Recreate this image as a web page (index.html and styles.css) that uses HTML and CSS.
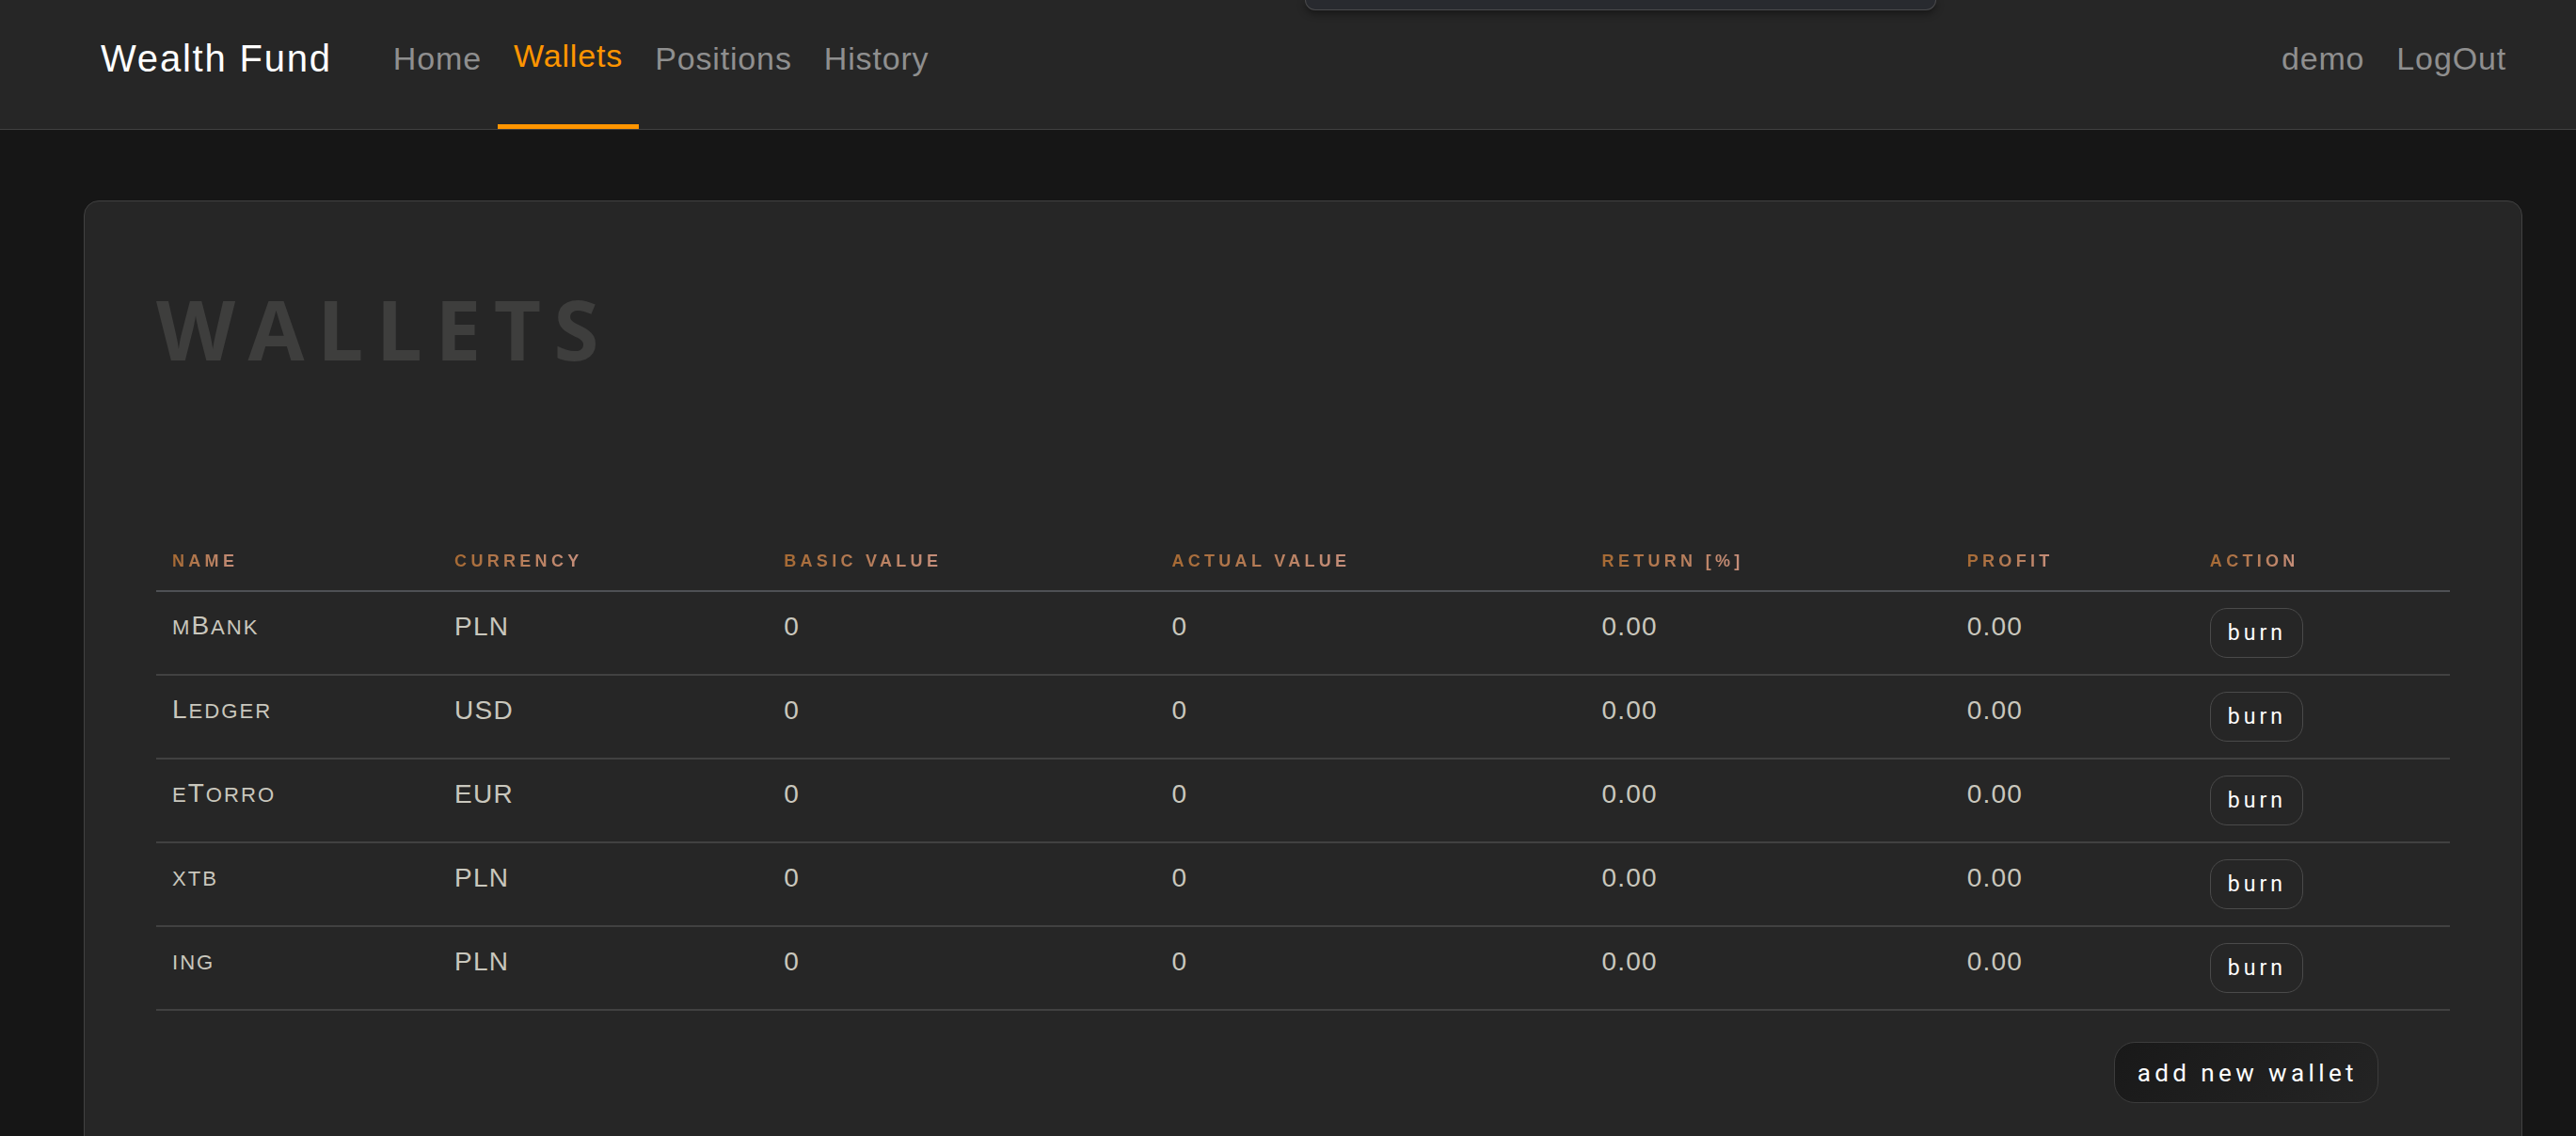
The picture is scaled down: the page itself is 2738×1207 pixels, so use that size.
FILE: index.html
```html
<!DOCTYPE html>
<html lang="en">
<head>
<meta charset="utf-8">
<title>Wealth Fund – Wallets</title>
<link rel="stylesheet" href="styles.css">
</head>
<body>
<div class="toast"></div>
<header class="topbar">
  <a class="brand" href="#">Wealth Fund</a>
  <nav class="nav">
    <a class="nav-link" href="#">Home</a>
    <a class="nav-link active" href="#">Wallets</a>
    <a class="nav-link" href="#">Positions</a>
    <a class="nav-link" href="#">History</a>
  </nav>
  <nav class="nav nav-right">
    <a class="nav-link" href="#">demo</a>
    <a class="nav-link" href="#">LogOut</a>
  </nav>
</header>
<main class="page">
  <section class="card">
    <h1 class="title">Wallets</h1>
    <table class="wallets">
      <colgroup>
        <col class="c-name"><col class="c-cur"><col class="c-basic"><col class="c-actual"><col class="c-ret"><col class="c-profit"><col class="c-action">
      </colgroup>
      <thead>
        <tr>
          <th><span>Name</span></th>
          <th><span>Currency</span></th>
          <th><span>Basic value</span></th>
          <th><span>Actual value</span></th>
          <th><span>Return [%]</span></th>
          <th><span>Profit</span></th>
          <th><span>Action</span></th>
        </tr>
      </thead>
      <tbody>
        <tr><td class="name"><span class="sc">m</span>B<span class="sc">ank</span></td><td>PLN</td><td>0</td><td>0</td><td>0.00</td><td>0.00</td><td class="action"><button class="btn-burn">burn</button></td></tr>
        <tr><td class="name">L<span class="sc">edger</span></td><td>USD</td><td>0</td><td>0</td><td>0.00</td><td>0.00</td><td class="action"><button class="btn-burn">burn</button></td></tr>
        <tr><td class="name"><span class="sc">e</span>T<span class="sc">orro</span></td><td>EUR</td><td>0</td><td>0</td><td>0.00</td><td>0.00</td><td class="action"><button class="btn-burn">burn</button></td></tr>
        <tr><td class="name"><span class="sc">xtb</span></td><td>PLN</td><td>0</td><td>0</td><td>0.00</td><td>0.00</td><td class="action"><button class="btn-burn">burn</button></td></tr>
        <tr><td class="name"><span class="sc">ing</span></td><td>PLN</td><td>0</td><td>0</td><td>0.00</td><td>0.00</td><td class="action"><button class="btn-burn">burn</button></td></tr>
      </tbody>
    </table>
    <div class="actions">
      <button class="btn-add">add new wallet</button>
    </div>
  </section>
</main>
</body>
</html>
```
FILE: styles.css
```css
* { box-sizing: border-box; }

html, body {
  margin: 0;
  padding: 0;
}

body {
  background: #161616;
  font-family: "Liberation Sans", Arial, sans-serif;
  color: #c9c7bd;
  position: relative;
  min-height: 1207px;
}

.toast {
  position: absolute;
  left: 1387px;
  top: 0;
  width: 671px;
  height: 11px;
  background: #282a2f;
  border: 1px solid #4a4a4c;
  border-top: none;
  border-radius: 0 0 12px 12px;
  box-shadow: 0 3px 9px rgba(0, 0, 0, 0.45);
  z-index: 5;
}

/* ---------- top bar ---------- */
.topbar {
  display: flex;
  align-items: stretch;
  height: 138px;
  background: #262626;
  border-bottom: 1px solid #404040;
  padding: 0 57px 0 107px;
}

.brand {
  display: flex;
  align-items: center;
  padding-bottom: 13px;
  margin-right: 48px;
  font-size: 40px;
  letter-spacing: 1.8px;
  color: #ffffff;
  text-decoration: none;
}

.nav {
  display: flex;
  align-items: stretch;
}

.nav-right {
  margin-left: auto;
}

.nav-link {
  display: flex;
  align-items: center;
  padding: 0 17px 13px;
  font-size: 34px;
  letter-spacing: 0.85px;
  color: #8f8f8f;
  text-decoration: none;
}

.nav-link.active {
  color: #ff9500;
  border-bottom: 5px solid #ff9500;
}

/* ---------- page ---------- */
.page {
  padding: 75px 57px 0 89px;
}

.card {
  background: #262626;
  border: 1px solid #414141;
  border-radius: 16px;
  padding: 92px 76px 80px;
}

.title {
  margin: 0;
  font-family: "Open Sans", "Liberation Sans", sans-serif;
  font-weight: 700;
  font-size: 87px;
  line-height: 87px;
  letter-spacing: 13.5px;
  text-transform: uppercase;
  color: #3e3e3d;
}

/* ---------- table ---------- */
.wallets {
  width: 100%;
  margin-top: 175px;
  table-layout: fixed;
  border-collapse: separate;
  border-spacing: 0;
}

.c-name { width: 300px; }
.c-cur { width: 350px; }
.c-basic { width: 412px; }
.c-actual { width: 457px; }
.c-ret { width: 388px; }
.c-profit { width: 258px; }
.c-action { width: 272px; }

.wallets th {
  text-align: left;
  padding: 18px 17px 20px;
  font-size: 18px;
  line-height: 21px;
  font-weight: 700;
  letter-spacing: 4.3px;
  text-transform: uppercase;
  border-bottom: 2px solid #4e5054;
  white-space: nowrap;
}

.wallets th span {
  background: linear-gradient(90deg, #a66a34, #c68f7c);
  -webkit-background-clip: text;
  background-clip: text;
  color: transparent;
}

.wallets td {
  height: 89px;
  padding: 0 17px 13px;
  vertical-align: middle;
  font-size: 28px;
  line-height: 32px;
  letter-spacing: 1.2px;
  color: #c9c7bd;
  border-bottom: 2px solid #414141;
}

.wallets td.name {
  letter-spacing: 2px;
}

.sc {
  font-size: 0.79em;
  text-transform: uppercase;
}

.wallets td.action {
  padding: 0 17px;
}

.btn-burn {
  display: block;
  height: 53px;
  padding: 0 17px 0 18px;
  font-family: Roboto, "Liberation Sans", sans-serif;
  font-size: 23px;
  letter-spacing: 4px;
  color: #ffffff;
  background: #262626;
  border: 1px solid #4a4a4a;
  border-radius: 18px;
}

.actions {
  display: flex;
  justify-content: flex-end;
  margin-top: 33px;
  padding-right: 76px;
}

.btn-add {
  height: 65px;
  padding: 0 21px 0 24px;
  font-family: Roboto, "Liberation Sans", sans-serif;
  font-size: 26px;
  letter-spacing: 4.4px;
  color: #ffffff;
  background: linear-gradient(135deg, #191919, #242424);
  border: 1px solid #3c3c3c;
  border-radius: 22px;
}
```
